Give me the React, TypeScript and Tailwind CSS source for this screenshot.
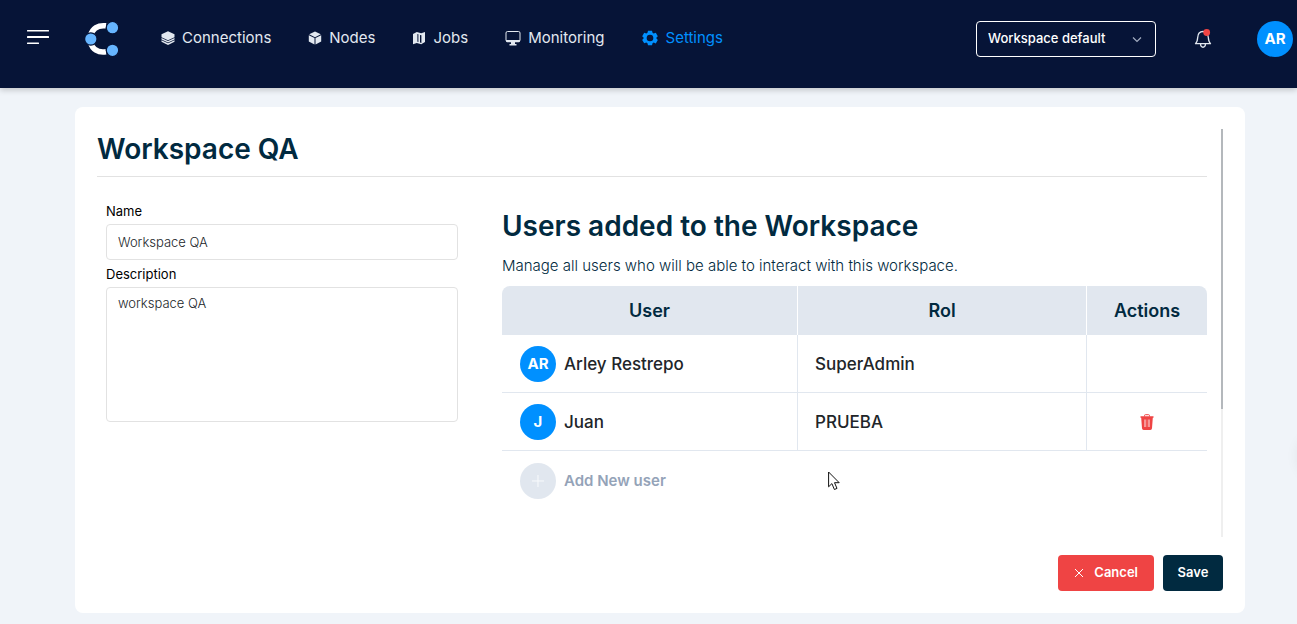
import { useState } from "react";

type IconName = "layers" | "cube" | "map" | "monitor" | "gear";

const navItems: { label: string; icon: IconName; active?: boolean }[] = [
  { label: "Connections", icon: "layers" },
  { label: "Nodes", icon: "cube" },
  { label: "Jobs", icon: "map" },
  { label: "Monitoring", icon: "monitor" },
  { label: "Settings", icon: "gear", active: true },
];

const users = [
  { initials: "AR", name: "Arley Restrepo", role: "SuperAdmin", removable: false },
  { initials: "J", name: "Juan", role: "PRUEBA", removable: true },
];

function NavIcon({ name }: { name: IconName }) {
  switch (name) {
    case "layers":
      return (
        <svg viewBox="0 0 14 14" className="size-[14px]" fill="currentColor" aria-hidden="true">
          <path d="M7 .3 13.5 3.3v2.9L7 9.2.5 6.2V3.300Z" />
          <path d="m.5 7 6.500 3 6.500-3v1.500L7 11.500.5 8.500Z" />
          <path d="m.5 9.300 6.500 3 6.500-3v1.400L7 13.900.5 10.700Z" />
        </svg>
      );
    case "cube":
      return (
        <svg viewBox="0 0 14 14" className="size-[14px]" fill="currentColor" aria-hidden="true">
          <path d="M7 .5 12.8 3.3 7 6.2 1.2 3.3Z" />
          <path d="M.8 4.2 6.5 7v6.5L.8 10.6ZM13.2 4.2 7.5 7v6.5l5.7-2.900Z" />
        </svg>
      );
    case "map":
      return (
        <svg viewBox="0 0 14 14" className="size-[14px]" fill="currentColor" aria-hidden="true">
          <path
            fillRule="evenodd"
            d="M1 3 4.8 1l4.4 1.2L13 1v10l-3.8 2.2L4.800 12 1 13.2ZM5.4 3v7.800l1 .3V3.300ZM8 4v7.600l1.400.4V4.300Z"
          />
        </svg>
      );
    case "monitor":
      return (
        <svg viewBox="0 0 16 16" className="size-4" aria-hidden="true">
          <rect x="1" y="1.5" width="14" height="10" rx="1.5" fill="none" stroke="currentColor" />
          <path d="M1 10h14v1.500l-1 .8H2l-1-.8ZM6 12h4v2h1.500v1.500h-7V14H6Z" fill="currentColor" />
        </svg>
      );
    case "gear":
      return (
        <svg viewBox="0 0 24 24" className="size-4" fill="currentColor" aria-hidden="true">
          <path
            fillRule="evenodd"
            d="M9 1h6l.8 3.200 1.700 1L20.700 4l3 5.200-2.200 2.300v1L23.700 15l-3 5.100-3.200-1.200-1.700 1L15 23H9l-.8-3.100-1.700-1L3.300 20l-3-5.100 2.200-2.400v-1L.3 9.200l3-5.200 3.200 1.200 1.700-1ZM12 7a5 5 0 1 0 0 10 5 5 0 0 0 0-10Z"
          />
        </svg>
      );
  }
}

function Logo() {
  return (
    <svg viewBox="0 0 34 34" className="size-[34px]" aria-hidden="true">
      <path d="M21 3.8C13 2.8 7.5 6.5 5.5 13.5M5.5 20.5C7.5 27.5 13 31 21 29.8" fill="none" stroke="#fff" strokeWidth="5.5" />
      <g fill="#66b5ff" stroke="#061437" strokeWidth="1.2">
        <circle cx="5.8" cy="17" r="6.2" />
        <circle cx="27.5" cy="5.7" r="6.2" />
        <circle cx="27.5" cy="28.3" r="6.2" />
      </g>
    </svg>
  );
}

function Avatar({ initials }: { initials: string }) {
  return (
    <span className="flex size-9 shrink-0 items-center justify-center rounded-full bg-[#0090ff] text-[15px] font-bold text-white">
      {initials}
    </span>
  );
}

function Header() {
  return (
    <header className="flex h-[88px] items-start bg-[#061437] pt-[21px] pr-1 pl-[27px] text-[#e2e8f0] shadow-[0_2px_6px_rgba(0,0,0,0.2)]">
      <div className="flex h-9 items-center">
        <button type="button" aria-label="Toggle menu" className="mr-9">
          <svg viewBox="0 0 22 20" className="h-5 w-[22px]" fill="#fff" aria-hidden="true">
            <rect y="1" width="22" height="1.5" rx=".5" />
            <rect y="7" width="22" height="2" rx=".5" />
            <rect y="13.5" width="12" height="1.5" rx=".5" />
          </svg>
        </button>
        <a href="#home" aria-label="Home">
          <Logo />
        </a>
      </div>
      <nav className="ml-[42px] flex h-[34px] items-center gap-[37px]">
        {navItems.map((item) => (
          <a
            key={item.label}
            href={"#" + item.label.toLowerCase()}
            className={
              item.active
                ? "flex items-center gap-2 text-[15px] text-[#0090ff]"
                : "flex items-center gap-[7px] text-[15px]"
            }
          >
            <NavIcon name={item.icon} />
            {item.label}
          </a>
        ))}
      </nav>
      <div className="ml-auto flex h-9 items-center">
        <div className="relative">
          <select
            aria-label="Workspace"
            className="h-9 w-[180px] appearance-none rounded border border-white bg-[#061437] pr-8 pl-[11px] text-[13px] font-medium text-white"
          >
            <option>Workspace default</option>
          </select>
          <svg
            viewBox="0 0 10 10"
            className="pointer-events-none absolute top-[14px] right-[14px] size-[10px]"
            fill="none"
            stroke="#a3acc0"
            strokeWidth="1.2"
            aria-hidden="true"
          >
            <path d="m1 2.5 4 4 4-4" />
          </svg>
        </div>
        <button type="button" aria-label="Notifications" className="mr-[45px] ml-[38px]">
          <svg viewBox="0 0 18 20" className="h-5 w-[18px]" fill="none" aria-hidden="true">
            <path
              d="M1.500 14.700c1.800-1.600 2-3.500 2.200-6.200C3.900 4.500 5.800 2.500 9 2.500s5.100 2 5.300 6c.2 2.700.4 4.600 2.200 6.200ZM6.500 15c.3 4.300 4.700 4.300 5 0"
              stroke="#e2e8f0"
              strokeWidth="1.300"
              strokeLinejoin="round"
            />
            <circle cx="12.7" cy="3.5" r="3.4" fill="#ef4444" />
          </svg>
        </button>
        <Avatar initials="AR" />
      </div>
    </header>
  );
}

function TrashIcon() {
  return (
    <svg viewBox="0 0 14 16" className="h-4 w-[14px]" aria-hidden="true">
      <path d="M4.5 2.500V1.500Q4.500.7 5.500.7h3q1 0 1 .8v1" fill="none" stroke="#ef4444" />
      <path d="M.5 2.300h13v1.500h-.7L12 14.300Q11.900 16 10.300 16H3.700Q2.100 16 2 14.300L1.200 3.800H.5Z" fill="#ef4444" />
      <path d="M5 5.500v7.500M9 5.500v7.500" stroke="#fff" strokeWidth="1.2" opacity=".75" />
      <path d="M7 5.500v7.500" stroke="#fff" strokeWidth=".5" opacity=".5" />
    </svg>
  );
}

function UsersTable() {
  return (
    <>
      <table className="w-full table-fixed border-separate border-spacing-0">
        <colgroup>
          <col className="w-[42%]" />
          <col className="w-[41%]" />
          <col className="w-[17%]" />
        </colgroup>
        <thead>
          <tr className="h-[49px] text-lg text-[#012a40]">
            <th className="rounded-tl-lg border-r border-white bg-[#e1e7ef] font-semibold">User</th>
            <th className="border-r border-white bg-[#e1e7ef] font-semibold">Rol</th>
            <th className="rounded-tr-lg bg-[#e1e7ef] font-semibold">Actions</th>
          </tr>
        </thead>
        <tbody className="text-[17px] leading-6 font-medium text-[#212529]">
          {users.map((user) => (
            <tr key={user.name}>
              <td className="border-r border-b border-[#e1e7ef] pt-[11px] pb-[10px] pl-[18px]">
                <div className="flex items-center gap-2">
                  <Avatar initials={user.initials} />
                  {user.name}
                </div>
              </td>
              <td className="border-r border-b border-[#e1e7ef] pl-[17px]">{user.role}</td>
              <td className="border-b border-[#e1e7ef]">
                {user.removable && (
                  <button type="button" aria-label={"Remove " + user.name} className="mx-auto block">
                    <TrashIcon />
                  </button>
                )}
              </td>
            </tr>
          ))}
        </tbody>
      </table>
      <button
        type="button"
        className="mt-3 ml-[18px] flex items-center gap-2 text-[15px] font-semibold text-[#94a3b8]"
      >
        <span className="flex size-9 items-center justify-center rounded-full bg-[#e1e7ef]">
          <svg viewBox="0 0 12 12" className="size-3" stroke="#f8fafc" aria-hidden="true">
            <path d="M6 0v12M0 6h12" />
          </svg>
        </span>
        Add New user
      </button>
    </>
  );
}

export default function App() {
  const [name, setName] = useState("Workspace QA");
  const [description, setDescription] = useState("workspace QA");

  return (
    <div className="relative min-h-screen overflow-hidden bg-[#f0f4f9] pb-[11px] font-['Inter',sans-serif]">
      <Header />
      <main className="mt-[19px] mr-[52px] ml-[75px] rounded-lg bg-white p-[22px]">
        <div className="flex justify-between gap-[14px]">
          <div className="min-h-[408px] grow">
            <h1 className="border-b border-[#e2e2e2] pb-[7px] text-[28px] leading-10 font-semibold text-[#012a40]">
              Workspace QA
            </h1>
            <div className="grid grid-cols-[1fr_2fr] pt-6">
              <form className="flex flex-col px-[9px] text-[13px] leading-5">
                <label htmlFor="name" className="mb-[3px]">
                  Name
                </label>
                <input
                  id="name"
                  value={name}
                  onChange={(e) => setName(e.target.value)}
                  className="mb-1 h-9 rounded border border-[#e2e2e2] px-[11px] font-light text-[#212529]"
                />
                <label htmlFor="description" className="mb-[3px]">
                  Description
                </label>
                <textarea
                  id="description"
                  value={description}
                  onChange={(e) => setDescription(e.target.value)}
                  className="h-[135px] resize-none rounded border border-[#e2e2e2] px-[11px] py-[5px] font-light text-[#212529]"
                />
              </form>
              <section className="pt-1 pl-[35px]">
                <h2 className="text-[28px] leading-[42px] font-semibold text-[#012a40]">Users added to the Workspace</h2>
                <p className="mt-[7px] mb-2 text-[15px] leading-6 font-light text-[#012a40]">
                  Manage all users who will be able to interact with this workspace.
                </p>
                <UsersTable />
              </section>
            </div>
          </div>
          <div className="w-[2px] shrink-0 bg-[#efefef]">
            <div className="h-[280px] bg-[#b4b8bc]" />
          </div>
        </div>
        <div className="mt-[18px] flex justify-end gap-[9px] text-[13px] font-semibold text-white">
          <button type="button" className="flex h-9 items-center gap-[10px] rounded bg-[#ef4444] px-4">
            <svg viewBox="0 0 10 10" className="size-[10px]" stroke="currentColor" aria-hidden="true">
              <path d="m1 1 8 8M9 1 1 9" />
            </svg>
            Cancel
          </button>
          <button type="button" className="h-9 min-w-[60px] rounded bg-[#012a40] px-[14px]">
            Save
          </button>
        </div>
      </main>
      <div className="absolute top-[438px] -right-10 size-9 rounded-full shadow-[0_0_16px_rgba(0,0,0,0.12)]" />
      <svg
        viewBox="0 0 13 20"
        className="pointer-events-none absolute top-[471px] left-[828px] h-5 w-[13px]"
        aria-hidden="true"
      >
        <path d="M.6 1v14.800l3.300-3.200 2.500 5.900 2.600-1.100-2.500-5.700h4.700Z" fill="#fff" stroke="#111" />
      </svg>
    </div>
  );
}
